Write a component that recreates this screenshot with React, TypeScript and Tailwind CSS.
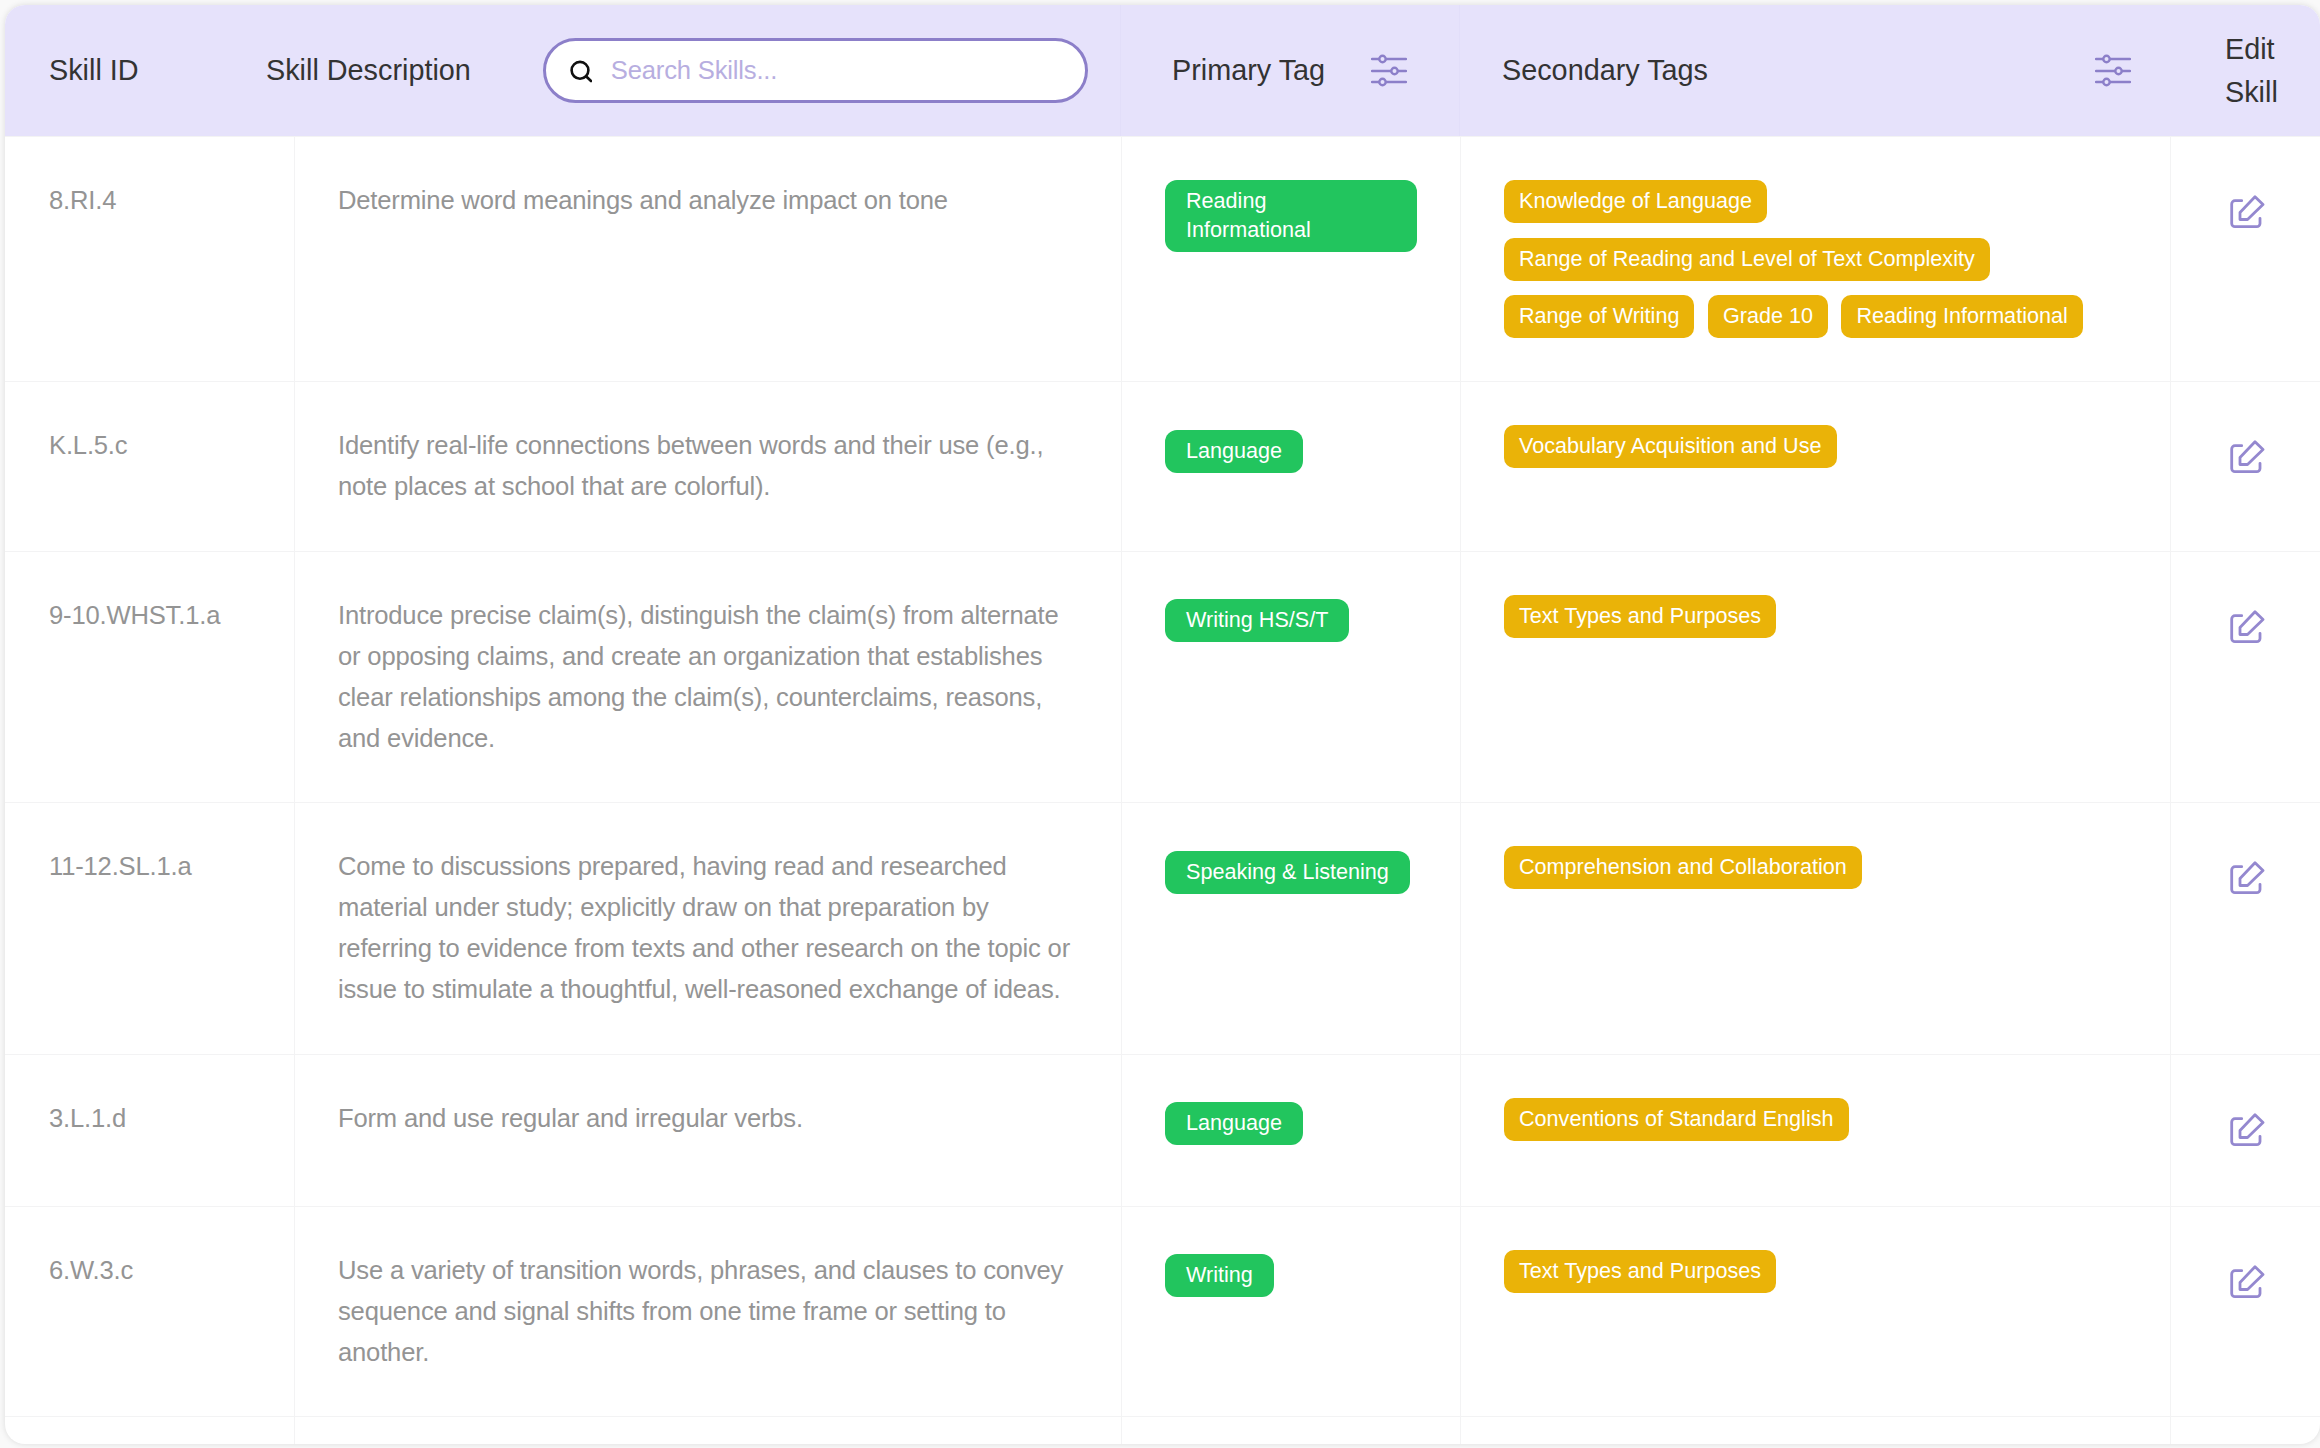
const skills = [
  { id: "8.RI.4", desc: "Determine word meanings and analyze impact on tone", primary: "Reading Informational", secondary: ["Knowledge of Language", "Range of Reading and Level of Text Complexity", "Range of Writing", "Grade 10", "Reading Informational"] },
  { id: "K.L.5.c", desc: "Identify real-life connections between words and their use (e.g., note places at school that are colorful).", primary: "Language", secondary: ["Vocabulary Acquisition and Use"] },
  { id: "9-10.WHST.1.a", desc: "Introduce precise claim(s), distinguish the claim(s) from alternate or opposing claims, and create an organization that establishes clear relationships among the claim(s), counterclaims, reasons, and evidence.", primary: "Writing HS/S/T", secondary: ["Text Types and Purposes"] },
  { id: "11-12.SL.1.a", desc: "Come to discussions prepared, having read and researched material under study; explicitly draw on that preparation by referring to evidence from texts and other research on the topic or issue to stimulate a thoughtful, well-reasoned exchange of ideas.", primary: "Speaking & Listening", secondary: ["Comprehension and Collaboration"] },
  { id: "3.L.1.d", desc: "Form and use regular and irregular verbs.", primary: "Language", secondary: ["Conventions of Standard English"] },
  { id: "6.W.3.c", desc: "Use a variety of transition words, phrases, and clauses to convey sequence and signal shifts from one time frame or setting to another.", primary: "Writing", secondary: ["Text Types and Purposes"] },
];

const FilterIcon = () => (
  <svg width="36" height="36" viewBox="0 0 36 36" fill="none" stroke="#8c7fc9" strokeWidth="2.4" strokeLinecap="round">
    <path d="M1 6h34M1 18h34M1 29h34" />
    <circle cx="11.5" cy="6" r="3.2" fill="#e6e2fb" />
    <circle cx="23.5" cy="18" r="3.2" fill="#e6e2fb" />
    <circle cx="11.5" cy="29" r="3.2" fill="#e6e2fb" />
  </svg>
);

const EditIcon = () => (
  <svg width="36" height="36" viewBox="0 0 36 36" fill="none" stroke="#9488cf" strokeWidth="2.8" strokeLinecap="round" strokeLinejoin="round">
    <path d="M12.7 5.7H6a3.3 3.3 0 0 0-3.3 3.3v19.4A3.3 3.3 0 0 0 6 31.7h21.7a3.3 3.3 0 0 0 3.3-3.3v-5.1" />
    <path d="M26 1.7l8 7.8-15.5 15H11v-7z" />
  </svg>
);

const App = () => (
  <div className="min-h-screen bg-[#f9f9f9] pl-[5px] pt-[5px] font-['Liberation_Sans',Arial,sans-serif]">
    <div className="h-[1439px] overflow-hidden rounded-[20px] bg-white shadow-[0_0_6px_rgba(0,0,0,0.12)]">
      <div className="flex h-[131px] items-center bg-[#e6e2fb] text-[28.8px] leading-[43px] text-[#333333]">
        <div className="flex h-full w-[217px] items-center pl-[44px]">Skill ID</div>
        <div className="flex h-full w-[899px] items-center border-r border-[#e2def9] pl-[44px]">
          <span>Skill Description</span>
          <div className="ml-[72px] flex h-[65px] w-[545px] items-center rounded-full border-[3px] border-[#8c7fc9] bg-white pl-[22px]">
            <svg width="24" height="24" viewBox="0 0 24 24" fill="none" stroke="#111111" strokeWidth="2.6" strokeLinecap="round">
              <circle cx="12" cy="11.3" r="8.4" />
              <path d="M18.3 17.5l4.7 4.5" />
            </svg>
            <input placeholder="Search Skills..." className="ml-[19px] w-[440px] bg-transparent text-[25.6px] tracking-[-0.18px] outline-none placeholder:text-[#b7aee0]" />
          </div>
        </div>
        <div className="flex h-full w-[339px] items-center border-r border-[#e2def9] pl-[51px]">
          <span>Primary Tag</span>
          <div className="ml-[46px]"><FilterIcon /></div>
        </div>
        <div className="flex h-full w-[710px] items-center pl-[42px]">
          <span>Secondary Tags</span>
          <div className="ml-auto mr-[39px]"><FilterIcon /></div>
        </div>
        <div className="w-[150px] pl-[55px] pr-[9px]">Edit Skill</div>
      </div>

      {skills.map((s) => (
        <div key={s.id} className="grid grid-cols-[289px_827px_339px_710px_150px] border-t border-[#f3f3f4] text-[25.6px] leading-[41px] tracking-[-0.18px] text-[#949494]">
          <div className="pb-[43.5px] pl-[44px] pt-[43px]">{s.id}</div>
          <div className="border-l border-[#f3f3f4] pb-[43.5px] pl-[43px] pr-[44px] pt-[43px]">{s.desc}</div>
          <div className="border-l border-[#f3f3f4] px-[43px] pb-[43.5px] pt-[43px]">
            <div className="flex min-h-[52px] items-center">
              <span className="rounded-[12px] bg-[#22c55e] px-[21px] pb-[8px] pt-[6px] text-[21.6px] leading-[29px] tracking-normal text-white">{s.primary}</span>
            </div>
          </div>
          <div className="flex flex-wrap content-start gap-x-[13.5px] gap-y-[14.5px] border-l border-[#f3f3f4] px-[43px] pb-[43px] pt-[43px]">
            {s.secondary.map((t) => (
              <span key={t} className="rounded-[10px] bg-[#eab308] px-[15px] pb-[8px] pt-[6px] text-[21.6px] leading-[29px] tracking-normal text-white">{t}</span>
            ))}
          </div>
          <div className="border-l border-[#f3f3f4] pb-[57px] pl-[58px] pt-[58px]"><EditIcon /></div>
        </div>
      ))}

      <div className="grid h-[40px] grid-cols-[289px_827px_339px_710px_150px] border-t border-[#f3f3f4]">
        <div />
        <div className="border-l border-[#f3f3f4]" />
        <div className="border-l border-[#f3f3f4]" />
        <div className="border-l border-[#f3f3f4]" />
        <div className="border-l border-[#f3f3f4]" />
      </div>
    </div>
  </div>
);

export default App;
